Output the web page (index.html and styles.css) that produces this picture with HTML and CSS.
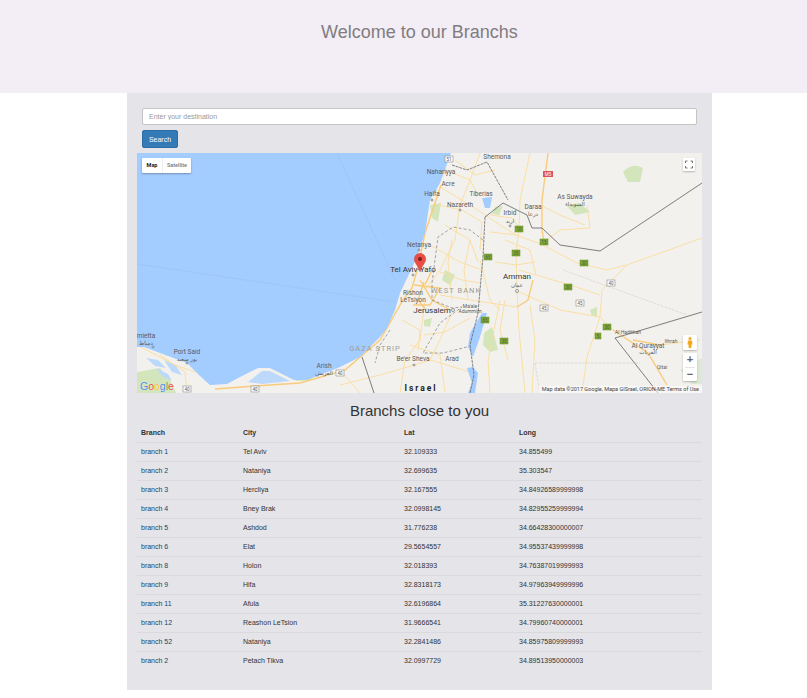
FILE: index.html
```html
<!DOCTYPE html>
<html lang="en">
<head>
    <meta charset="UTF-8">
    <title>Branchs</title>
    <link rel="stylesheet" href="styles.css">
</head>
<body>
    <div class="jumbo">
        <h1>Welcome to our Branchs</h1>
    </div>
    <div class="container">
        <div class="search">
            <input type="text" class="dest" placeholder="Enter your destination">
            <button class="btn">Search</button>
        </div>
        <div class="map">
            <svg class="map-svg" viewBox="137 153 565 240" width="565" height="240">
                <rect class="land" x="137" y="153" width="565" height="240"/>
                <!-- green patches -->
                <path class="green" d="M137 372L160 368L170 380L176 393L137 393Z"/>
                <path class="green" d="M623 172Q632 162 643 168L640 182L628 182Z"/>
                <path class="green" d="M484 333L492 327L498 350L490 352L483 345Z"/>
                <path class="green-pale" d="M680 370L702 358V384L692 384Z"/>
                <path class="green" d="M430 205L441 203L438 222L432 218Z"/>
                <path class="green" d="M495 207L503 206L499 215L492 214Z"/>
                <path class="green" d="M566 205L580 203L590 212L575 215Z"/>
                <path class="green" d="M424 320L432 318L430 327L424 326Z"/>
                <path class="green" d="M445 270L455 275L450 285L442 280Z"/>
                <path class="green" d="M590 310L597 307L597 316L592 316Z"/>
                <path class="green" d="M294 376L312 372L312 380L296 381Z"/>
                <!-- roads -->
                <g class="road">
                    <path d="M702 238L627 265L607 270L577 263L543 245L516 235L490 232"/>
                    <path d="M627 265L602 290L600 317L587 357L582 393"/>
                    <path d="M530 153L520 200L519 229L516 253L517 291L519 330L525 393"/>
                    <path d="M544 242L560 230L590 228L587 205"/>
                    <path d="M517 291L560 310L600 317L613 330"/>
                    <path d="M517 307L470 300L440 295"/>
                    <path d="M519 270L570 285L600 295"/>
                    <path d="M440 187L470 205L500 225L516 235"/>
                    <path d="M480 153L470 180L460 205L455 240L440 270L425 290"/>
                    <path d="M425 300L420 340L405 360L400 393"/>
                    <path d="M453 310L440 340L430 360L470 372L475 393"/>
                    <path d="M500 300L488 360L490 393"/>
                    <path d="M431 360L380 375L340 385"/>
                    <path d="M160 355L185 372L187 393"/>
                    <path d="M137 345L175 365L195 372"/>
                    <path d="M340 370L360 393"/>
                    <path d="M480 260L490 300L500 310"/>
                    <path d="M660 345L700 340"/>
                    <path d="M438 205L462 210L482 222L480 250"/>
                    <path d="M445 225L470 240L478 262"/>
                    <path d="M430 245L460 262L482 270"/>
                    <path d="M440 272L462 280L480 283"/>
                    <path d="M452 240L448 262L452 300"/>
                    <path d="M470 240L464 270L468 300"/>
                    <path d="M424 335L445 332L470 318"/>
                    <path d="M410 345L440 355L445 392"/>
                    <path d="M402 320L420 330L418 350"/>
                    <path d="M505 240L530 250L536 275"/>
                    <path d="M490 215L512 218L520 228"/>
                    <path d="M540 205L560 215L585 225"/>
                    <path d="M495 262L516 265L535 262"/>
                    <path d="M505 300L500 330L508 360"/>
                    <path d="M530 305L535 340L532 393"/>
                    <path d="M455 160L475 175L495 170"/>
                    <path d="M450 172L470 180L478 195"/>
                </g>
                <g class="road-major">
                    <path d="M548 153L542 200L542 230L544 242"/>
                    <path d="M441 185L425 233L418 267L412 288L403 300L380 340L345 370L300 383L255 386L215 389"/>
                    <path d="M533 280L528 300L517 307"/>
                    <path d="M420 280L432 300L450 310"/>
                    <path d="M414 285L440 288L430 305L413 305"/>
                    <path d="M424 282L418 300L426 310"/>
                    <path d="M432 270L425 285"/>
                    <path d="M613 330L648 353L667 385"/>
                    <path d="M633 340L660 345"/>
                </g>
                <!-- water on top of the roads -->
                <path class="water" d="M137 153H451L440 183L430 200L425 233L417 257L410 272L400 293L395 310L387 328L380 337L360 357L340 367L307 380L294 380L270 368L258 368L240 377L227 384L210 385L199 375L187 363L160 353L144 347H137Z"/>
                <path class="lagoon" d="M262 371L270 371L290 381L262 384L248 382Z"/>
                <path class="water" d="M482 198L492 197L490 208L485 208Z"/>
                <path class="water" d="M482 313L487 313L480 337L473 357L468 347L470 333Z"/>
                <path class="water" d="M467 368L473 367L478 373L475 393H468L472 383Z"/>
                <path class="lagoon" d="M146 358L158 360L166 368L155 366Z"/>
                <path class="lagoon" d="M164 360L176 366L182 375L172 372Z"/>
                <path class="lagoon" d="M156 368L168 374L172 381L162 376Z"/>
                <path class="sea-line" d="M337 153L395 280M137 264L395 302"/>
                <!-- borders -->
                <path class="border" d="M702 183L600 251L560 245L542 228L532 228L527 215L503 203L485 217"/>
                <path class="border-river" d="M485 217L483 257L480 290L478 313L470 345L474 375L470 393"/>
                <path class="border" d="M702 312L615 338L658 393"/>
                <path class="border-river" d="M452 165L467 170L487 162L508 200"/>
                <path class="border" d="M362 357L374 393"/>
                <path class="border-dash" d="M483 240L470 230L453 227L438 237L432 283L432 300L452 308L462 307L440 323L423 353L443 353L467 347"/>
                <path class="border-dash" d="M390 330L380 345L375 363"/>
                <path class="border-faint" d="M563 270L687 315M535 363H640M535 363L540 393"/>
                <!-- road signs -->
                <g class="shield-g">
                    <rect x="515" y="226" width="8" height="6"/><rect x="540" y="239" width="8" height="6"/>
                    <rect x="512" y="250" width="8" height="6"/><rect x="484" y="254" width="8" height="6"/>
                    <rect x="580" y="260" width="8" height="6"/><rect x="564" y="284" width="8" height="6"/>
                    <rect x="481" y="317" width="8" height="6"/><rect x="500" y="338" width="8" height="6"/>
                    <rect x="603" y="324" width="8" height="6"/><rect x="595" y="333" width="6" height="6"/>
                </g>
                <g class="shield-w">
                    <rect x="607" y="280" width="8" height="6"/><rect x="576" y="300" width="8" height="6"/>
                    <rect x="540" y="305" width="8" height="6"/><rect x="445" y="156" width="8" height="6"/>
                    <rect x="183" y="386" width="8" height="6"/><rect x="251" y="386" width="8" height="6"/>
                    <rect x="336" y="370" width="8" height="6"/>
                </g>
                <rect class="shield-r" x="543" y="171" width="10" height="6"/>
                <g class="sign-text">
                    <text x="519" y="231">10</text><text x="544" y="244">15</text><text x="516" y="255">35</text>
                    <text x="488" y="259">65</text><text x="584" y="265">30</text><text x="568" y="289">30</text>
                    <text x="485" y="322">65</text><text x="504" y="343">35</text><text x="607" y="329">30</text>
                    <text x="598" y="338">5</text><text x="611" y="285">40</text><text x="580" y="305">45</text>
                    <text x="544" y="310">45</text><text x="449" y="161">51</text><text x="187" y="391">40</text>
                    <text x="255" y="391">40</text><text x="340" y="375">40</text>
                    <text class="sign-m" x="548" y="176">M5</text>
                </g>
                <!-- place labels -->
                <g class="place">
                    <text x="497" y="159">Shemona</text>
                    <text x="441" y="174">Nahariyya</text>
                    <text x="448" y="186">Acre</text>
                    <text x="432" y="196">Haifa</text>
                    <text x="481" y="196">Tiberias</text>
                    <text x="460" y="207">Nazareth</text>
                    <text x="510" y="215">Irbid</text>
                    <text class="ar" x="510" y="223">اربد</text>
                    <text x="533" y="209">Daraa</text>
                    <text class="ar" x="533" y="216">درعا</text>
                    <text x="575" y="199">As Suwayda</text>
                    <text class="ar" x="575" y="206">السويداء</text>
                    <text x="419" y="247">Netanya</text>
                    <text class="big" x="413" y="272">Tel Aviv-Yafo</text>
                    <text x="413" y="295">Rishon</text>
                    <text x="413" y="302">LeTsiyon</text>
                    <text class="big" x="432" y="313">Jerusalem</text>
                    <text class="tiny" x="470" y="308">Ma'ale</text>
                    <text class="tiny" x="470" y="313">Adummim</text>
                    <text x="413" y="361">Be'er Sheva</text>
                    <text x="452" y="361">Arad</text>
                    <text class="big" x="517" y="279">Amman</text>
                    <text class="ar" x="517" y="287">عمان</text>
                    <text class="tiny" x="628" y="334">Al Hadithah</text>
                    <text x="648" y="348">Al Qurayyat</text>
                    <text class="ar" x="648" y="354">القريات</text>
                    <text class="tiny" x="671" y="343">Ithrah</text>
                    <text class="tiny" x="662" y="369">Qitai</text>
                    <text x="187" y="354">Port Said</text>
                    <text class="ar" x="187" y="361">بور سعيد</text>
                    <text x="324" y="368">Arish</text>
                    <text class="ar" x="324" y="375">العريش</text>
                    <text x="146" y="338">mietta</text>
                    <text class="ar" x="146" y="345">دمياط</text>
                    <text class="region" x="456" y="293">WEST BANK</text>
                    <text class="region" x="375" y="351">GAZA STRIP</text>
                    <text class="country" x="421" y="390.500">Israel</text>
                </g>
                <g class="dots">
                    <circle cx="419" cy="250" r="1"/><circle cx="413" cy="275" r="1"/>
                    <circle cx="432" cy="200" r="1"/><circle cx="460" cy="210" r="1"/>
                    <circle cx="510" cy="226" r="1"/><circle cx="414" cy="365" r="1"/>
                    <circle cx="453" cy="310" r="1.5"/><circle cx="517" cy="291" r="1.5"/>
                    <circle cx="187" cy="363" r="1"/><circle cx="153" cy="347" r="1"/>
                </g>
                <!-- marker -->
                <path class="pin" d="M420 272C418 265 414.3 263 414.3 259A5.7 5.7 0 0 1 425.7 259C425.7 263 422 265 420 272Z"/>
                <circle class="pin-dot" cx="420" cy="259" r="2"/>
            </svg>

            <div class="map-type">
                <span class="type-on">Map</span>
                <span class="type-off">Satellite</span>
            </div>
            <div class="map-btn full">
                <svg viewBox="0 0 12 13" width="12" height="13">
                    <path class="full-icon" d="M2.500 5V3H4.500M7.500 3H9.500V5M9.500 8V10H7.500M4.500 10H2.500V8"/>
                </svg>
            </div>
            <div class="map-btn pegman">
                <svg viewBox="0 0 14 15" width="14" height="15">
                    <circle class="peg" cx="7" cy="3.500" r="1.500"/>
                    <path class="peg" d="M5 5.500H9L9.500 9.500H8.500L8.300 13H5.700L5.500 9.500H4.500Z"/>
                </svg>
            </div>
            <div class="map-btn zoom">
                <span class="zoom-key">+</span>
                <span class="zoom-sep"></span>
                <span class="zoom-key">−</span>
            </div>
            <div class="google"><i class="g-b">G</i><i class="g-r">o</i><i class="g-y">o</i><i class="g-b">g</i><i class="g-g">l</i><i class="g-r">e</i></div>
            <div class="attr">Map data ©2017 Google, Mapa GISrael, ORION-ME Terms of Use</div>
        </div>

        <h2>Branchs close to you</h2>
        <table class="branches">
            <thead>
                <tr><th class="c1">Branch</th><th class="c2">City</th><th class="c3">Lat</th><th>Long</th></tr>
            </thead>
            <tbody>
                <tr><td><a href="#">branch 1</a></td><td>Tel Aviv</td><td>32.109333</td><td>34.855499</td></tr>
                <tr><td><a href="#">branch 2</a></td><td>Nataniya</td><td>32.699635</td><td>35.303547</td></tr>
                <tr><td><a href="#">branch 3</a></td><td>Hercliya</td><td>32.167555</td><td>34.84926589999998</td></tr>
                <tr><td><a href="#">branch 4</a></td><td>Bney Brak</td><td>32.0998145</td><td>34.82955259999994</td></tr>
                <tr><td><a href="#">branch 5</a></td><td>Ashdod</td><td>31.776238</td><td>34.66428300000007</td></tr>
                <tr><td><a href="#">branch 6</a></td><td>Elat</td><td>29.5654557</td><td>34.95537439999998</td></tr>
                <tr><td><a href="#">branch 8</a></td><td>Holon</td><td>32.018393</td><td>34.76387019999993</td></tr>
                <tr><td><a href="#">branch 9</a></td><td>Hifa</td><td>32.8318173</td><td>34.97963949999996</td></tr>
                <tr><td><a href="#">branch 11</a></td><td>Afula</td><td>32.6196864</td><td>35.31227630000001</td></tr>
                <tr><td><a href="#">branch 12</a></td><td>Reashon LeTsion</td><td>31.9666541</td><td>34.79960740000001</td></tr>
                <tr><td><a href="#">branch 52</a></td><td>Nataniya</td><td>32.2841486</td><td>34.85975809999993</td></tr>
                <tr><td><a href="#">branch 2</a></td><td>Petach Tikva</td><td>32.0997729</td><td>34.89513950000003</td></tr>
            </tbody>
        </table>
    </div>
</body>
</html>
```

FILE: styles.css
```css
html, body {
    margin: 0;
    padding: 0;
}
body {
    font-family: "Liberation Sans", Arial, sans-serif;
    color: #333;
    background-color: #fff;
    height: 698px;
    overflow: hidden;
}
.jumbo {
    height: 93px;
    background-color: #f3eef6;
    padding-left: 32px;
    box-sizing: border-box;
}
h1 {
    margin: 0;
    padding-top: 22px;
    font-size: 18px;
    line-height: 20px;
    font-weight: 400;
    color: #817c80;
    text-align: center;
}
.container {
    width: 585px;
    height: 597px;
    margin-left: 127px;
    padding: 15px 10px 0;
    box-sizing: border-box;
    background-color: #e4e4e9;
}
.search {
    padding: 0 5px;
}
.dest {
    display: block;
    width: 100%;
    height: 17px;
    padding: 0 6px;
    box-sizing: border-box;
    border: 1px solid #c4c4c4;
    border-radius: 2px;
    background: #fff;
    font-family: inherit;
    font-size: 7px;
    outline: none;
}
.dest::placeholder {
    color: #999;
}
.btn {
    display: block;
    width: 36px;
    height: 18px;
    margin-top: 5px;
    padding: 0;
    border: 1px solid #2e6da4;
    border-radius: 2px;
    background-color: #337ab7;
    color: #fff;
    font-family: inherit;
    font-size: 7px;
}
.map {
    position: relative;
    width: 565px;
    height: 240px;
    margin-top: 5px;
    overflow: hidden;
}
.map-svg {
    display: block;
}
.land { fill: #f3f1ed; }
.water { fill: #a3ccff; }
.lagoon { fill: #bcd9fb; }
.green { fill: #d3e5bb; }
.green-pale { fill: #dde8d6; }
.road, .road-major, .border, .border-river, .border-dash, .border-faint, .sea-line, .full-icon {
    fill: none;
}
.road { stroke: #fadd9c; stroke-width: 0.9; }
.road-major { stroke: #f9cb7c; stroke-width: 1.4; }
.sea-line { stroke: #93bcf0; stroke-width: 0.4; }
.border { stroke: #6f6f6f; stroke-width: 0.9; }
.border-river { stroke: #666; stroke-width: 0.8; stroke-dasharray: 3 0.8; }
.border-dash { stroke: #7f7f7f; stroke-width: 0.7; stroke-dasharray: 3 2; }
.border-faint { stroke: #cfcfcf; stroke-width: 0.6; stroke-dasharray: 3 1; }
.shield-g rect { fill: #7da92f; stroke: #5f8a24; stroke-width: 0.5; }
.shield-w rect { fill: #fff; stroke: #8a8a8a; stroke-width: 0.6; }
.shield-r { fill: #d9535f; }
.sign-text {
    font-family: Roboto, sans-serif;
    font-size: 4.500px;
    text-anchor: middle;
    fill: #555;
}
.sign-m { fill: #fff; }
.place {
    font-family: Roboto, "Liberation Sans", sans-serif;
    font-size: 6.500px;
    text-anchor: middle;
    fill: #5b5b5b;
}
.place .ar {
    font-family: "DejaVu Sans", sans-serif;
    font-size: 5.500px;
}
.place .big {
    font-size: 8px;
    fill: #333;
}
.place .tiny {
    font-size: 5px;
}
.place .region {
    font-size: 7.500px;
    letter-spacing: 1px;
    fill: #a09c96;
}
.place .country {
    font-size: 8.500px;
    font-weight: 700;
    letter-spacing: 2px;
    fill: #222;
}
.dots circle {
    fill: #fff;
    stroke: #555;
    stroke-width: 0.6;
}
.pin { fill: #ea4d43; stroke: #c5372f; stroke-width: 0.4; }
.pin-dot { fill: #7c1f1a; }
.map-type {
    position: absolute;
    left: 5px;
    top: 5px;
    display: flex;
    width: 49px;
    height: 15px;
    background: #fff;
    border-radius: 1px;
    box-shadow: 0 1px 2px rgba(0,0,0,0.3);
    font-family: Roboto, sans-serif;
    font-size: 5.500px;
    line-height: 15px;
    text-align: center;
}
.type-on {
    width: 20px;
    color: #222;
    font-weight: 700;
    border-right: 1px solid #eee;
}
.type-off {
    flex: 1;
    color: #777;
    font-weight: 500;
}
.map-btn {
    position: absolute;
    background: #fff;
    border-radius: 1px;
    box-shadow: 0 1px 2px rgba(0,0,0,0.25);
}
.map-btn svg {
    display: block;
}
.full {
    left: 546px;
    top: 5px;
    width: 12px;
    height: 13px;
}
.full-icon { stroke: #666; stroke-width: 0.9; }
.pegman {
    left: 546px;
    top: 182px;
    width: 14px;
    height: 15px;
}
.peg { fill: #f2a81d; }
.zoom {
    left: 546px;
    top: 200px;
    width: 14px;
    height: 28px;
    display: flex;
    flex-direction: column;
    align-items: center;
}
.zoom-key {
    flex: 1;
    font-size: 11px;
    font-weight: 700;
    line-height: 13px;
    color: #666;
}
.zoom-sep {
    width: 10px;
    height: 1px;
    background: #e6e6e6;
}
.google {
    position: absolute;
    left: 3px;
    top: 227px;
    font-family: "Liberation Sans", sans-serif;
    font-size: 10.500px;
    line-height: 12px;
    text-shadow: 0 0 1px #fff;
}
.google i {
    font-style: normal;
}
.g-b { color: #4a86ec; }
.g-r { color: #e0503f; }
.g-y { color: #f3bb2c; }
.g-g { color: #3fa85a; }
.attr {
    position: absolute;
    right: 0;
    bottom: 0;
    padding: 0 3px;
    height: 7px;
    line-height: 7px;
    background: rgba(255,255,255,0.5);
    font-family: Roboto, sans-serif;
    font-size: 5.500px;
    color: #444;
    white-space: nowrap;
}
h2 {
    margin: 9px 0 0;
    font-size: 15px;
    line-height: 17px;
    font-weight: 400;
    color: #333;
    text-align: center;
}
.branches {
    width: 100%;
    margin-top: 5px;
    border-collapse: collapse;
    font-size: 7px;
    line-height: 10px;
}
.branches th, .branches td {
    padding: 4px;
    text-align: left;
    border-bottom: 1px solid #dadade;
}
.branches tbody tr:last-child td {
    border-bottom: none;
}
.c1 { width: 94px; }
.c2 { width: 153px; }
.c3 { width: 107px; }
.branches a {
    color: #1c4466;
    text-decoration: none;
}
```
